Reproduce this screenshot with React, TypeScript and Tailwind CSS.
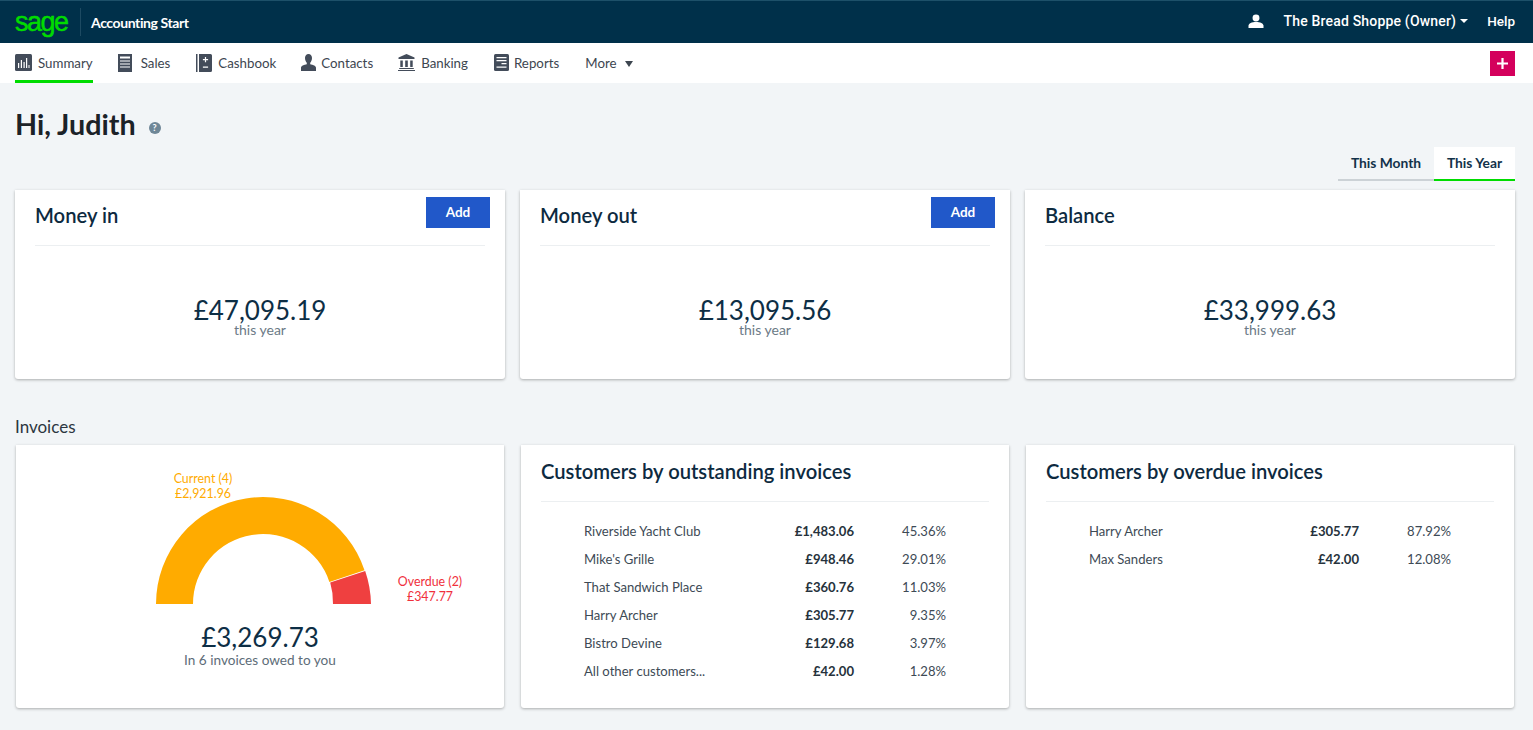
import { ReactNode } from "react";

const SummaryIcon = () => (
  <svg viewBox="0 0 17 17" className="h-[17px] w-[17px] shrink-0 fill-[#434c5a]">
    <rect width="17" height="17" rx="1.500" />
    <path d="M3 14V9h1.200v5zM5.800 14V6h1.200v8zM8.500 14V8h1.200v6zM11 14V4h1.200v10zM13.500 14v-3h1v3z" fill="#fff" />
  </svg>
);

const SalesIcon = () => (
  <svg viewBox="0 0 14 18" className="h-[18px] w-[14px] shrink-0 fill-[#434c5a]">
    <path d="M0 0h14v18H0z" />
    <path d="M2 2.500h10v2H2zM2 6.500h10v1H2zM2 9.500h10v1H2zM2 12.500h10v1H2z" fill="#fff" />
  </svg>
);

const CashbookIcon = () => (
  <svg viewBox="0 0 16 18" className="h-[18px] w-[16px] shrink-0 fill-[#434c5a]">
    <path d="M0 0h1.500v18H0zM3 0h11.500A1.500 1.500 0 0116 1.500v15a1.500 1.500 0 01-1.500 1.500H3z" />
    <path d="M8.900 3h1.200v2h2v1.200h-2v2H8.900v-2h-2V5h2zM6.900 12.500h5.200v1.200H6.900z" fill="#fff" />
  </svg>
);

const ContactsIcon = () => (
  <svg viewBox="0 0 15 17" className="h-[17px] w-[15px] shrink-0 fill-[#434c5a]">
    <path d="M7.500 0c2.200 0 3.500 1.700 3.500 4 0 2.100-.9 3.800-1.800 4.800v1.400c2.500.5 5.800 1.300 5.800 3.600V17H0v-3.200c0-2.300 3.300-3.100 5.800-3.600V8.800C4.900 7.800 4 6.100 4 4c0-2.300 1.300-4 3.500-4z" />
  </svg>
);

const BankingIcon = () => (
  <svg viewBox="0 0 17 17" className="h-[17px] w-[17px] shrink-0 fill-[#434c5a]">
    <path d="M8.500 0l8 3.500V5H.5V3.500zM2.300 6.500h2.500v6.500H2.300zM7.200 6.500h2.600v6.500H7.200zM12.200 6.500h2.500v6.500h-2.500zM1.200 14h14.600v1H1.200zM0 16h17v1H0z" />
  </svg>
);

const ReportsIcon = () => (
  <svg viewBox="0 0 15 17" className="h-[17px] w-[15px] shrink-0 fill-[#434c5a]">
    <rect width="15" height="17" rx="1.500" />
    <path d="M2.500 3h10v1.200h-10zM2.500 6h10v1.200h-10zM7.500 9h5v1.200h-5zM2.500 12.500h10v1.200h-10z" fill="#fff" />
  </svg>
);

function NavItem({ icon, label, active, className }: { icon: ReactNode; label: string; active?: boolean; className: string }) {
  return (
    <a className={`flex h-full items-center ${className} border-b-[3px] pt-[2px] text-[13.300px] text-[#3d4650] ${active ? "border-b-[#00dc00]" : "border-b-transparent"}`}>
      {icon}
      <span className="pt-[3px]">{label}</span>
    </a>
  );
}

function StatCard({ title, amount, add }: { title: string; amount: string; add?: boolean }) {
  return (
    <section className="h-[189px] rounded-b-[3px] bg-white px-5 shadow-[0_1px_3px_rgba(0,0,0,0.3)]">
      <div className="flex h-[56px] items-start justify-between border-b border-[#eceff1]">
        <h2 className="pt-[10px] text-[20.200px] leading-[30px] font-semibold text-[#0d2a3f]">{title}</h2>
        {add && (
          <button className="mt-[7px] -mr-[5px] h-[31px] w-[64px] bg-[#2158c9] text-[13.500px] font-bold text-white">Add</button>
        )}
      </div>
      <div className="pt-[53px] text-center">
        <div className="text-[26px] leading-[22px] text-[#0d2e45]">{amount}</div>
        <div className="text-[14px] leading-[18px] text-[#6b7a86]">this year</div>
      </div>
    </section>
  );
}

interface CustomerRow {
  name: string;
  amount: string;
  percent: string;
}

const outstanding: CustomerRow[] = [
  { name: "Riverside Yacht Club", amount: "£1,483.06", percent: "45.36%" },
  { name: "Mike's Grille", amount: "£948.46", percent: "29.01%" },
  { name: "That Sandwich Place", amount: "£360.76", percent: "11.03%" },
  { name: "Harry Archer", amount: "£305.77", percent: "9.35%" },
  { name: "Bistro Devine", amount: "£129.68", percent: "3.97%" },
  { name: "All other customers...", amount: "£42.00", percent: "1.28%" },
];

const overdue: CustomerRow[] = [
  { name: "Harry Archer", amount: "£305.77", percent: "87.92%" },
  { name: "Max Sanders", amount: "£42.00", percent: "12.08%" },
];

function CustomerCard({ title, rows }: { title: string; rows: CustomerRow[] }) {
  return (
    <section className="h-[263px] rounded-b-[3px] bg-white px-5 shadow-[0_1px_3px_rgba(0,0,0,0.3)]">
      <h2 className="flex h-[57px] items-center border-b border-[#eceff1] pb-[4px] text-[20.200px] font-semibold text-[#0d2a3f]">{title}</h2>
      <div className="pt-[16px]">
        {rows.map((row) => (
          <div key={row.name} className="flex h-[28px] items-center px-[43px] text-[13.100px] text-[#3d4a55]">
            <span className="flex-1">{row.name}</span>
            <span className="w-[90px] text-right font-bold text-[#26323c]">{row.amount}</span>
            <span className="w-[92px] text-right">{row.percent}</span>
          </div>
        ))}
      </div>
    </section>
  );
}

function Gauge() {
  return (
    <section className="flex h-[263px] flex-col items-center rounded-b-[3px] bg-white shadow-[0_1px_3px_rgba(0,0,0,0.3)]">
      <div className="relative h-[160px] w-full">
        <svg viewBox="0 0 488 160" className="absolute inset-0 h-full w-full">
          <path d="M140 159A107 107 0 01348.500 125.200L313.400 136.900A70 70 0 00177 159Z" fill="#ffab00" />
          <path d="M349.200 125.900A107 107 0 01355 159H317A70 70 0 00314.200 137.600Z" fill="#ef4040" />
        </svg>
        <div className="absolute top-[26px] left-[117px] w-[140px] text-center text-[12.400px] leading-[15px] text-[#ffab00]">
          <div>Current (4)</div>
          <div>£2,921.96</div>
        </div>
        <div className="absolute top-[129px] left-[344px] w-[140px] text-center text-[12.400px] leading-[15px] text-[#f0303c]">
          <div>Overdue (2)</div>
          <div>£347.77</div>
        </div>
      </div>
      <div className="w-full text-center">
        <div className="pt-[16px] text-[26px] leading-[32px] text-[#0d2e45]">£3,269.73</div>
        <div className="-mt-[1px] text-[13.600px] leading-[16px] text-[#5d6c78]">In 6 invoices owed to you</div>
      </div>
    </section>
  );
}

export default function App() {
  return (
    <div className="h-[730px] w-full overflow-hidden bg-[#f2f5f7] font-['Lato','Noto_Sans',sans-serif]">
      <header className="flex h-[43px] items-center border-t border-[#1d5069] bg-[#00304a] pr-[18px] pl-[15px] text-white">
        <span className="w-[52px] font-['Liberation_Sans',sans-serif] text-[27px] leading-none tracking-[-1.500px] text-[#00dc00] [-webkit-text-stroke:0.5px_#00dc00]">sage</span>
        <span className="mr-[10px] ml-[13px] h-[28px] w-px bg-[#1d4a62]" />
        <span className="text-[14px] font-bold tracking-[-0.400px]">Accounting Start</span>
        <div className="ml-auto flex items-center pb-[2px] font-['Roboto',sans-serif] text-[14px] font-medium">
          <svg viewBox="0 0 16 16" className="mr-[20px] h-[15px] w-[16px] fill-white">
            <circle cx="8" cy="4.200" r="3.700" />
            <path d="M0 15v-2.500C0 10 3.500 8.500 8 8.500s8 1.500 8 4V15z" />
          </svg>
          <span className="tracking-[0.180px]">The Bread Shoppe (Owner)</span>
          <span className="ml-[4px] h-0 w-0 border-x-[4px] border-t-[4px] border-x-transparent border-t-white" />
          <span className="ml-[19px] text-[13.500px]">Help</span>
        </div>
      </header>

      <nav className="flex h-[40px] items-center bg-white pr-[18px] pl-[15px]">
        <div className="flex h-full items-center gap-[25px]">
          <NavItem icon={<SummaryIcon />} label="Summary" className="gap-[6px]" active />
          <NavItem icon={<SalesIcon />} label="Sales" className="gap-[9px]" />
          <NavItem icon={<CashbookIcon />} label="Cashbook" className="ml-[1px] gap-[6px]" />
          <NavItem icon={<ContactsIcon />} label="Contacts" className="gap-[5px]" />
          <NavItem icon={<BankingIcon />} label="Banking" className="gap-[6px]" />
          <NavItem icon={<ReportsIcon />} label="Reports" className="ml-[1px] gap-[5px]" />
          <a className="ml-[1px] flex h-full items-center gap-[8px] pt-[2px] text-[13.300px] text-[#3d4650]">
            More
            <span className="h-0 w-0 border-x-[4px] border-t-[6px] border-x-transparent border-t-[#3d4650]" />
          </a>
        </div>
        <button className="mt-[1px] ml-auto flex h-[25px] w-[25px] items-center justify-center bg-[#d4005c]">
          <svg viewBox="0 0 11 11" className="h-[11px] w-[11px] fill-white">
            <path d="M4.400 0h2.200v4.400H11v2.200H6.600V11H4.400V6.600H0V4.400h4.400z" />
          </svg>
        </button>
      </nav>

      <main className="pr-[18px] pl-[15px]">
        <div className="flex h-[64px] items-center gap-[13px] pt-[19px]">
          <h1 className="text-[28.700px] font-bold text-[#1c2228]">Hi, Judith</h1>
          <span className="mt-[6px] flex h-[12px] w-[12px] items-center justify-center rounded-full bg-[#6f8797] text-[9px] leading-none font-bold text-white">?</span>
        </div>

        <div className="flex h-[43px] items-start justify-end">
          <div className="flex text-[13.800px] font-bold text-[#12324a]">
            <span className="flex h-[34px] w-[96px] items-center justify-center border-b-2 border-[#ccd2d6]">This Month</span>
            <span className="flex h-[34px] w-[81px] items-center justify-center border-b-2 border-[#00dc00] bg-white">This Year</span>
          </div>
        </div>

        <div className="grid grid-cols-3 gap-[15px]">
          <StatCard title="Money in" amount="£47,095.19" add />
          <StatCard title="Money out" amount="£13,095.56" add />
          <StatCard title="Balance" amount="£33,999.63" />
        </div>

        <h3 className="pt-[38px] pb-[8px] text-[17px] leading-[20px] text-[#2c3640]">Invoices</h3>

        <div className="grid grid-cols-3 gap-[17px] px-px">
          <Gauge />
          <CustomerCard title="Customers by outstanding invoices" rows={outstanding} />
          <CustomerCard title="Customers by overdue invoices" rows={overdue} />
        </div>
      </main>
    </div>
  );
}
